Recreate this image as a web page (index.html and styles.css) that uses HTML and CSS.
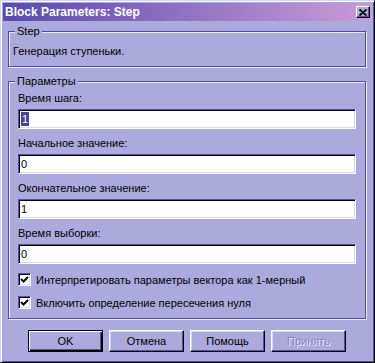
FILE: index.html
```html
<!DOCTYPE html>
<html lang="ru">
<head>
<meta charset="utf-8">
<title>Block Parameters: Step</title>
<link rel="stylesheet" href="styles.css">
</head>
<body>
<div class="window">
  <div class="titlebar">
    <span class="title">Block Parameters: Step</span>
    <span class="close">
      <svg width="8" height="7" viewBox="0 0 8 7"><path d="M0.5 0.5 L7.5 6.5 M7.5 0.5 L0.5 6.5" stroke="#000" stroke-width="1.8" fill="none"/></svg>
    </span>
  </div>
  <div class="content">
    <fieldset class="group group-step">
      <legend>Step</legend>
      <p class="desc">Генерация ступеньки.</p>
    </fieldset>
    <fieldset class="group group-params">
      <legend>Параметры</legend>
      <div class="field">
        <div class="label">Время шага:</div>
        <div class="edit"><span class="sel">1</span></div>
      </div>
      <div class="field">
        <div class="label">Начальное значение:</div>
        <div class="edit">0</div>
      </div>
      <div class="field">
        <div class="label">Окончательное значение:</div>
        <div class="edit">1</div>
      </div>
      <div class="field">
        <div class="label">Время выборки:</div>
        <div class="edit">0</div>
      </div>
      <div class="check">
        <span class="box"><svg width="9" height="9" viewBox="0 0 9 9"><path d="M1 4 L3.5 6.5 L8 2" stroke="#000" stroke-width="2" fill="none"/></svg></span>
        <span>Интерпретировать параметры вектора как 1-мерный</span>
      </div>
      <div class="check">
        <span class="box"><svg width="9" height="9" viewBox="0 0 9 9"><path d="M1 4 L3.5 6.5 L8 2" stroke="#000" stroke-width="2" fill="none"/></svg></span>
        <span>Включить определение пересечения нуля</span>
      </div>
    </fieldset>
    <div class="buttons">
      <div class="btn btn-default">OK</div>
      <div class="btn">Отмена</div>
      <div class="btn">Помощь</div>
      <div class="btn btn-disabled">Принять</div>
    </div>
  </div>
</div>
</body>
</html>
```
FILE: styles.css
```css
* { box-sizing: border-box; }
html, body { margin: 0; padding: 0; }
body {
  width: 375px;
  height: 363px;
  background: #aca9dc;
  font-family: "Liberation Sans", Arial, sans-serif;
  font-size: 11px;
  color: #000;
}
.window {
  width: 375px;
  height: 363px;
  background: #aca9dc;
  border: 1px solid;
  border-color: #d6d4f4 #000 #000 #d6d4f4;
  box-shadow: inset 1px 1px 0 #fff, inset -1px -1px 0 #5a50a8;
  padding: 2px;
  display: flex;
  flex-direction: column;
}
.titlebar {
  height: 18px;
  flex: none;
  background: linear-gradient(to right, #5a4aac, #c99bd8);
  display: flex;
  align-items: center;
  justify-content: space-between;
  padding: 0 2px 0 2px;
}
.title {
  color: #fff;
  font-weight: bold;
  font-size: 12px;
  line-height: 14px;
  white-space: nowrap;
}
.close {
  width: 14px;
  height: 12px;
  background: #aca9dc;
  border: 1px solid;
  border-color: #fff #000 #000 #fff;
  box-shadow: inset -1px -1px 0 #5a50a8;
  display: flex;
  align-items: center;
  justify-content: center;
}
.content {
  flex: 1;
  padding: 4px 6px 0 5px;
  display: flex;
  flex-direction: column;
}
.group {
  margin: 0;
  padding: 0 4px;
  min-width: 0;
  border: 1px solid #5548a6;
  box-shadow: inset 1px 1px 0 #eceaff, 1px 1px 0 #eceaff;
}
.group legend {
  padding: 0 2px;
  margin-left: 2px;
  line-height: 13px;
  background: #aca9dc;
}
.group-step { padding-top: 7px; padding-bottom: 8px; }
.desc { margin: 0; line-height: 13px; }
.group-params { margin-top: 8px; padding-top: 3px; padding-bottom: 7px; }
.field { margin: 0 5px 7px; }
.label { line-height: 14px; margin-bottom: 4px; white-space: nowrap; }
.edit {
  height: 20px;
  background: #fff;
  border: 1px solid;
  border-color: #5a50a8 #fff #fff #5a50a8;
  box-shadow: inset 1px 1px 0 #000, inset -1px -1px 0 #d8d6f4;
  padding: 0 2px;
  line-height: 18px;
}
.sel {
  display: inline-block;
  background: #4a3e9e;
  color: #fff;
  line-height: 14px;
  padding: 0 1px;
  vertical-align: middle;
  margin-top: -2px;
}
.check {
  margin: 0 5px;
  height: 17px;
  display: flex;
  align-items: center;
  white-space: nowrap;
}
.check + .check { margin-top: 6px; }
.box {
  width: 13px;
  height: 13px;
  flex: none;
  margin-right: 5px;
  background: #fff;
  border: 1px solid;
  border-color: #5a50a8 #fff #fff #5a50a8;
  box-shadow: inset 1px 1px 0 #000, inset -1px -1px 0 #d8d6f4;
  display: flex;
  align-items: center;
  justify-content: center;
}
.buttons {
  margin-top: 11px;
  display: flex;
  justify-content: center;
  gap: 6px;
}
.btn {
  width: 75px;
  height: 22px;
  border: 1px solid;
  border-color: #fff #000 #000 #fff;
  box-shadow: inset -1px -1px 0 #5a50a8, inset 1px 1px 0 #d8d6f6;
  display: flex;
  align-items: center;
  justify-content: center;
  line-height: 13px;
}
.btn-default {
  border-color: #000;
  box-shadow: inset 1px 1px 0 #fff, inset -1px -1px 0 #000, inset -2px -2px 0 #5a50a8;
}
.btn-disabled {
  color: #8683c2;
  text-shadow: 1px 1px 0 #eceaff;
}
```
